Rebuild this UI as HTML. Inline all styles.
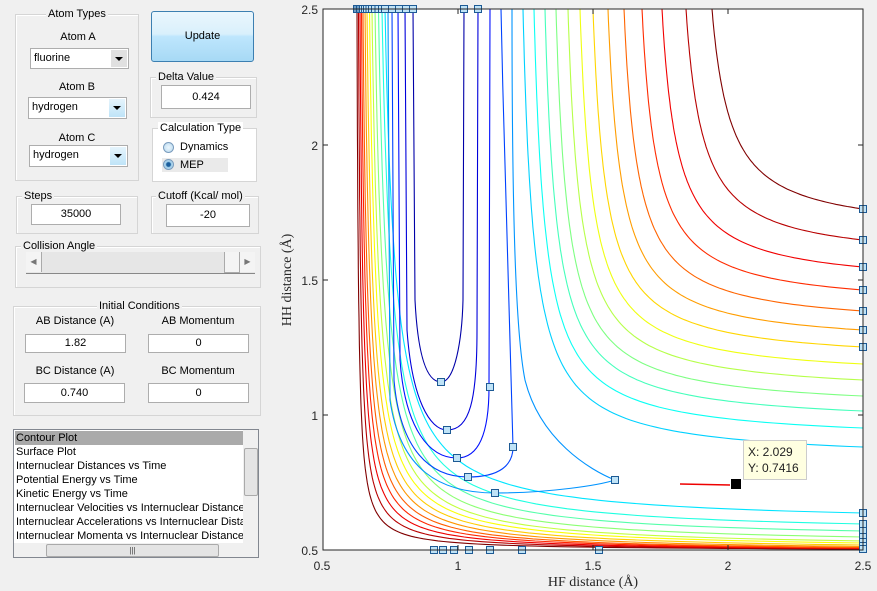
<!DOCTYPE html>
<html><head><meta charset="utf-8">
<style>
body{margin:0;width:877px;height:591px;background:#f0f0f0;position:relative;overflow:hidden;font-family:"Liberation Sans",sans-serif;font-size:11px;color:#000}
.a{position:absolute}
.g{position:absolute;border:1px solid #d5d5d5;box-shadow:inset 1px 1px 0 #fff}
.t{position:absolute;background:#f0f0f0;padding:0 2px;line-height:12px;top:-7px}
.in{position:absolute;background:#fff;border:1px solid #adadad;text-align:center;line-height:18px}
.sel{position:absolute;background:#fff;border:1px solid #adadad;line-height:18px;padding-left:3px;box-sizing:border-box}
.arr{position:absolute;right:1px;top:1px;bottom:1px;width:16px;background:#e0e0e0}
.arr.b{background:linear-gradient(#e5f4fc,#bfe4f8)}
.arr:after{content:"";position:absolute;left:4px;top:7px;border:4px solid transparent;border-top:4px solid #000;border-bottom:0}
.lbl{position:absolute;text-align:center}
.rad{position:absolute;width:11px;height:11px;border-radius:50%;border:1px solid #7a9cbd;background:radial-gradient(#eaf6fd,#b8d8ee);box-sizing:border-box}
</style></head><body>

<div class="g" style="left:15px;top:14px;width:122px;height:165px"><div class="t" style="left:30px">Atom Types</div></div>
<div class="lbl" style="left:30px;top:31px;width:96px">Atom A</div>
<div class="sel" style="left:30px;top:48px;width:99px;height:21px">fluorine<div class="arr"></div></div>
<div class="lbl" style="left:28px;top:81px;width:98px">Atom B</div>
<div class="sel" style="left:28px;top:97px;width:99px;height:22px">hydrogen<div class="arr b"></div></div>
<div class="lbl" style="left:28px;top:132px;width:98px">Atom C</div>
<div class="sel" style="left:29px;top:145px;width:99px;height:22px">hydrogen<div class="arr b"></div></div>

<div class="a" style="left:151px;top:11px;width:101px;height:49px;border:1px solid #3c7fb1;border-radius:3px;background:linear-gradient(#eaf6fd 0%,#d9f0fc 45%,#bee6fd 50%,#a7d9f5 100%);text-align:center;line-height:49px">Update</div>

<div class="g" style="left:150px;top:77px;width:105px;height:39px"><div class="t" style="left:5px">Delta Value</div></div>
<div class="in" style="left:161px;top:85px;width:88px;height:22px;line-height:22px">0.424</div>

<div class="g" style="left:152px;top:128px;width:103px;height:52px;background:#fff"><div class="t" style="left:5px;background:#fff">Calculation Type</div></div>
<div class="a" style="left:162px;top:158px;width:66px;height:14px;background:#eaeaea"></div>
<div class="rad" style="left:163px;top:142px"></div>
<div class="a" style="left:180px;top:141px">Dynamics</div>
<div class="rad" style="left:163px;top:159px;background:radial-gradient(#1b5e9c 30%,#9ccbe8 45%,#d0e8f6)"></div>
<div class="a" style="left:180px;top:159px">MEP</div>

<div class="g" style="left:16px;top:196px;width:120px;height:36px"><div class="t" style="left:5px">Steps</div></div>
<div class="in" style="left:31px;top:204px;width:88px;height:19px">35000</div>
<div class="g" style="left:151px;top:196px;width:106px;height:36px"><div class="t" style="left:4px">Cutoff (Kcal/ mol)</div></div>
<div class="in" style="left:166px;top:204px;width:82px;height:21px;line-height:21px">-20</div>

<div class="g" style="left:15px;top:246px;width:244px;height:40px"><div class="t" style="left:5px">Collision Angle</div></div>
<div class="a" style="left:26px;top:252px;width:229px;height:21px;background:#e6e6e6;border-bottom:1px solid #888"></div>
<div class="a" style="left:26px;top:252px;width:15px;height:20px;background:#f4f4f4;border-right:1px solid #aaa;color:#777;font-size:8px;line-height:20px;text-align:center">◀</div>
<div class="a" style="left:224px;top:252px;width:14px;height:20px;background:#f4f4f4;border:1px solid #aaa;border-top:0"></div>
<div class="a" style="left:240px;top:252px;width:15px;height:20px;background:#f4f4f4;color:#777;font-size:8px;line-height:20px;text-align:center">▶</div>

<div class="g" style="left:13px;top:306px;width:246px;height:108px"><div class="t" style="left:83px">Initial Conditions</div></div>
<div class="lbl" style="left:25px;top:315px;width:100px">AB Distance (A)</div>
<div class="lbl" style="left:148px;top:315px;width:100px">AB Momentum</div>
<div class="in" style="left:25px;top:334px;width:99px;height:17px;line-height:17px">1.82</div>
<div class="in" style="left:148px;top:334px;width:99px;height:17px;line-height:17px">0</div>
<div class="lbl" style="left:25px;top:365px;width:100px">BC Distance (A)</div>
<div class="lbl" style="left:148px;top:365px;width:100px">BC Momentum</div>
<div class="in" style="left:24px;top:383px;width:99px;height:18px">0.740</div>
<div class="in" style="left:148px;top:383px;width:99px;height:18px">0</div>

<div class="a" style="left:13px;top:429px;width:244px;height:127px;background:#fff;border:1px solid #828790;overflow:hidden">
 <div style="position:absolute;left:1px;top:1px;width:228px;line-height:14px;white-space:nowrap;overflow:hidden">
  <div style="background:#aaa;padding-left:1px">Contour Plot</div>
  <div style="padding-left:1px">Surface Plot</div>
  <div style="padding-left:1px">Internuclear Distances vs Time</div>
  <div style="padding-left:1px">Potential Energy vs Time</div>
  <div style="padding-left:1px">Kinetic Energy vs Time</div>
  <div style="padding-left:1px">Internuclear Velocities vs Internuclear Distance</div>
  <div style="padding-left:1px">Internuclear Accelerations vs Internuclear Distance</div>
  <div style="padding-left:1px">Internuclear Momenta vs Internuclear Distance</div>
 </div>
 <div style="position:absolute;left:229px;top:0;width:15px;height:113px;background:#f0f0f0"></div>
 <div style="position:absolute;left:230px;top:18px;width:12px;height:46px;background:#e4e4e4;border:1px solid #aaa;border-radius:2px"></div>
 <div style="position:absolute;left:0;top:113px;width:244px;height:14px;background:#f0f0f0"></div>
 <div style="position:absolute;left:32px;top:114px;width:171px;height:11px;background:#e4e4e4;border:1px solid #aaa;border-radius:2px;font-size:8px;line-height:11px;text-align:center;color:#444">|||</div>
</div>

<svg class="a" style="left:0;top:0" width="877" height="591" id="s">
<rect x="323" y="9" width="540" height="541" fill="#fff"/>
<g id="c" fill="none" stroke-width="1.1"></g>
<g id="m" fill="#bfe3f7" stroke="#1d5a94" stroke-width="1"></g>
<rect x="323" y="9" width="540" height="541" fill="none" stroke="#262626" stroke-width="1"/>
<g stroke="#262626">
<line x1="458" y1="550" x2="458" y2="545"/><line x1="593" y1="550" x2="593" y2="545"/><line x1="728" y1="550" x2="728" y2="545"/>
<line x1="458" y1="9" x2="458" y2="14"/><line x1="593" y1="9" x2="593" y2="14"/><line x1="728" y1="9" x2="728" y2="14"/>
<line x1="323" y1="145" x2="328" y2="145"/><line x1="323" y1="280" x2="328" y2="280"/><line x1="323" y1="415" x2="328" y2="415"/>
<line x1="863" y1="145" x2="858" y2="145"/><line x1="863" y1="280" x2="858" y2="280"/><line x1="863" y1="415" x2="858" y2="415"/>
</g>
<g font-family="Liberation Sans,sans-serif" font-size="12" fill="#262626">
<text x="322" y="570" text-anchor="middle">0.5</text><text x="458" y="570" text-anchor="middle">1</text><text x="593" y="570" text-anchor="middle">1.5</text><text x="728" y="570" text-anchor="middle">2</text><text x="863" y="570" text-anchor="middle">2.5</text>
<text x="318" y="14" text-anchor="end">2.5</text><text x="318" y="150" text-anchor="end">2</text><text x="318" y="285" text-anchor="end">1.5</text><text x="318" y="420" text-anchor="end">1</text><text x="318" y="555" text-anchor="end">0.5</text>
</g>
<g font-family="Liberation Serif,serif" font-size="14" fill="#262626">
<text x="593" y="586" text-anchor="middle">HF distance (Å)</text>
<text transform="translate(291,280) rotate(-90)" text-anchor="middle">HH distance (Å)</text>
</g>
<line x1="680" y1="484" x2="730" y2="485" stroke="#e00" stroke-width="1.5"/>
<rect x="731" y="479" width="10" height="10" fill="#000"/>
<rect x="743.5" y="440.5" width="63" height="39" fill="#ffffe1" stroke="#ccc"/>
<g font-family="Liberation Sans,sans-serif" font-size="12" fill="#222"><text x="748" y="456">X: 2.029</text><text x="748" y="472">Y: 0.7416</text></g>
</svg>

<script>
function jet(t){function c(v){return Math.round(255*Math.max(0,Math.min(1,v)))}
return "rgb("+c(1.5-Math.abs(4*t-3))+","+c(1.5-Math.abs(4*t-2))+","+c(1.5-Math.abs(4*t-1))+")";}
var C=document.getElementById("c"),M=document.getElementById("m"),ns="http://www.w3.org/2000/svg";
function path(d,col){var p=document.createElementNS(ns,"path");p.setAttribute("d",d);p.setAttribute("stroke",col);C.appendChild(p);}
function mk(x,y){var r=document.createElementNS(ns,"rect");r.setAttribute("x",x-3.5);r.setAttribute("y",y-3.5);r.setAttribute("width",7);r.setAttribute("height",7);M.appendChild(r);}
function hyp(xt,yr,K,col){var e1=K/(yr-9),A=xt-e1;for(var i=0;i<4;i++){var e2=K/(863-A),B=yr+e2;e1=K/(B-9);A=xt-e1;}
var e2=K/(863-A),B=yr+e2,pts=[];
var N=90;for(var i=0;i<=N;i++){var u=i/N;
var lo=Math.log(xt-A),hi=Math.log(863-A);var v=lo+(hi-lo)*u;var x=A+Math.exp(v);var y=B-K/(x-A);pts.push(x.toFixed(1)+","+y.toFixed(1));}
path("M"+pts.join(" L"),col);}
var wx=[357,358.5,360,361.5,363,365,367,369.5,372,375,378.5,382,385];
var wy=[549,548.7,548.4,548,547.5,546.5,545,543,541,537,531,524,513];
for(var i=0;i<wx.length;i++){var f=i/(wx.length-1);hyp(wx[i],wy[i],800+f*4500,jet(1-f*0.65));mk(wx[i],9);}
var rx=[523,534,545,556,568,580,593,608,624,642,662,686,712];
var ry=[447,428,411,396,380,364,347,330,311,290,267,240,209];
for(var i=0;i<rx.length;i++){var f=i/(rx.length-1);hyp(rx[i],ry[i],4800-f*600,jet(0.33+f*0.67));}
[209,240,267,290,311,330,347].forEach(function(y){mk(863,y)});
[513,524,531,537,542,546,549].forEach(function(y){mk(863,y)});
[434,443,454,469,490,522,599].forEach(function(x){mk(x,550)});
path("M413,9 L415,300 C418,360 428,382 441,382 C455,382 462,340 463,300 L464,9",jet(0.04));
path("M405,9 L407,330 C412,400 430,430 447,430 C470,430 477,400 477,330 L478,9",jet(0.09));
path("M398,9 L400,360 C405,430 430,458 457,458 C480,458 489,430 489,387 L490,9",jet(0.14));
path("M392,9 L394,380 C400,450 430,477 468,477 C500,477 513,465 513,447 C513,420 505,200 501,9",jet(0.19));
path("M388,9 L390,400 C400,470 440,493 495,493 C550,493 600,485 615,480 C590,470 540,440 525,380 C515,330 512,200 512,9",jet(0.27));
[[392,9],[399,9],[406,9],[413,9],[464,9],[478,9],[441,382],[447,430],[457,458],[468,477],[495,493],[615,480],[490,387],[513,447]].forEach(function(p){mk(p[0],p[1])});
</script>
</body></html>
